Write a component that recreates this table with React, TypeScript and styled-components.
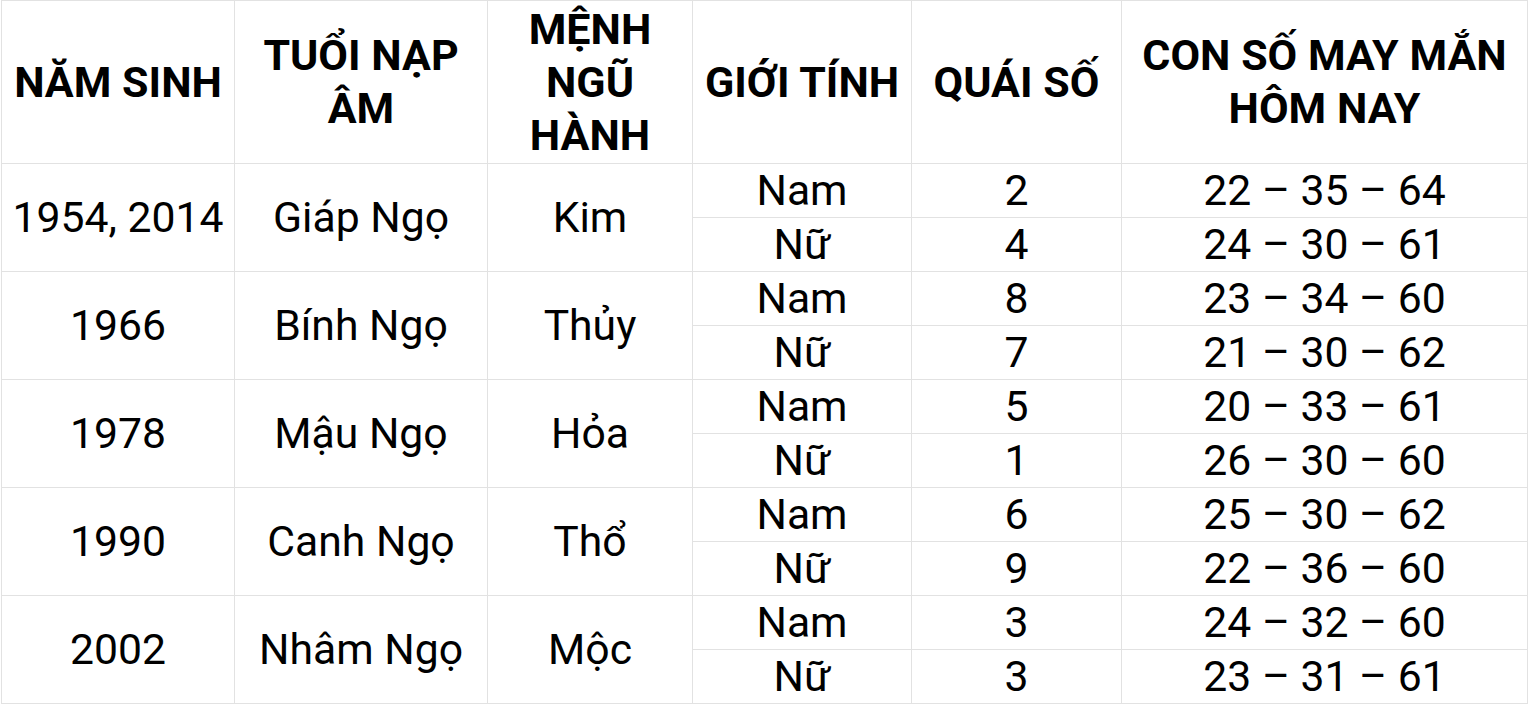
import React from "react";
import styled, { createGlobalStyle } from "styled-components";

const Global = createGlobalStyle`
  html, body { margin: 0; padding: 0; background: #ffffff; }
  body { font-family: Roboto, "Noto Sans", Arial, sans-serif; color: #000; }
`;

const Grid = styled.div`
  display: grid;
  grid-template-columns: 232px 252px 204px 218px 209px 405px;
  grid-template-rows: 162px repeat(10, 53px);
  gap: 1px;
  padding: 1px;
  margin-left: 1px;
  width: max-content;
  background: #e2e2e2;
`;

const Head = styled.div`
  background: #fff;
  display: flex;
  align-items: center;
  justify-content: center;
  text-align: center;
  font-weight: 700;
  font-size: 43px;
  line-height: 53px;
  padding: 0 4px;
`;

const Cell = styled.div<{ $span?: number }>`
  background: #fff;
  display: flex;
  align-items: center;
  justify-content: center;
  text-align: center;
  font-size: 42.7px;
  line-height: 1;
  white-space: nowrap;
  grid-row: ${(p) => (p.$span ? `span ${p.$span}` : "auto")};
`;

type Group = {
  year: string;
  tuoi: string;
  menh: string;
  rows: { gt: string; qs: string; so: string }[];
};

const data: Group[] = [
  {
    year: "1954, 2014",
    tuoi: "Giáp Ngọ",
    menh: "Kim",
    rows: [
      { gt: "Nam", qs: "2", so: "22 – 35 – 64" },
      { gt: "Nữ", qs: "4", so: "24 – 30 – 61" },
    ],
  },
  {
    year: "1966",
    tuoi: "Bính Ngọ",
    menh: "Thủy",
    rows: [
      { gt: "Nam", qs: "8", so: "23 – 34 – 60" },
      { gt: "Nữ", qs: "7", so: "21 – 30 – 62" },
    ],
  },
  {
    year: "1978",
    tuoi: "Mậu Ngọ",
    menh: "Hỏa",
    rows: [
      { gt: "Nam", qs: "5", so: "20 – 33 – 61" },
      { gt: "Nữ", qs: "1", so: "26 – 30 – 60" },
    ],
  },
  {
    year: "1990",
    tuoi: "Canh Ngọ",
    menh: "Thổ",
    rows: [
      { gt: "Nam", qs: "6", so: "25 – 30 – 62" },
      { gt: "Nữ", qs: "9", so: "22 – 36 – 60" },
    ],
  },
  {
    year: "2002",
    tuoi: "Nhâm Ngọ",
    menh: "Mộc",
    rows: [
      { gt: "Nam", qs: "3", so: "24 – 32 – 60" },
      { gt: "Nữ", qs: "3", so: "23 – 31 – 61" },
    ],
  },
];

export default function App() {
  return (
    <>
      <Global />
      <Grid>
        <Head>NĂM SINH</Head>
        <Head>TUỔI NẠP ÂM</Head>
        <Head>MỆNH NGŨ HÀNH</Head>
        <Head>GIỚI TÍNH</Head>
        <Head>QUÁI SỐ</Head>
        <Head>CON SỐ MAY MẮN HÔM NAY</Head>
        {data.map((g) => (
          <React.Fragment key={g.year}>
            <Cell $span={2}>{g.year}</Cell>
            <Cell $span={2}>{g.tuoi}</Cell>
            <Cell $span={2}>{g.menh}</Cell>
            <Cell>{g.rows[0].gt}</Cell>
            <Cell>{g.rows[0].qs}</Cell>
            <Cell>{g.rows[0].so}</Cell>
            <Cell style={{ gridColumn: 4 }}>{g.rows[1].gt}</Cell>
            <Cell>{g.rows[1].qs}</Cell>
            <Cell>{g.rows[1].so}</Cell>
          </React.Fragment>
        ))}
      </Grid>
    </>
  );
}
